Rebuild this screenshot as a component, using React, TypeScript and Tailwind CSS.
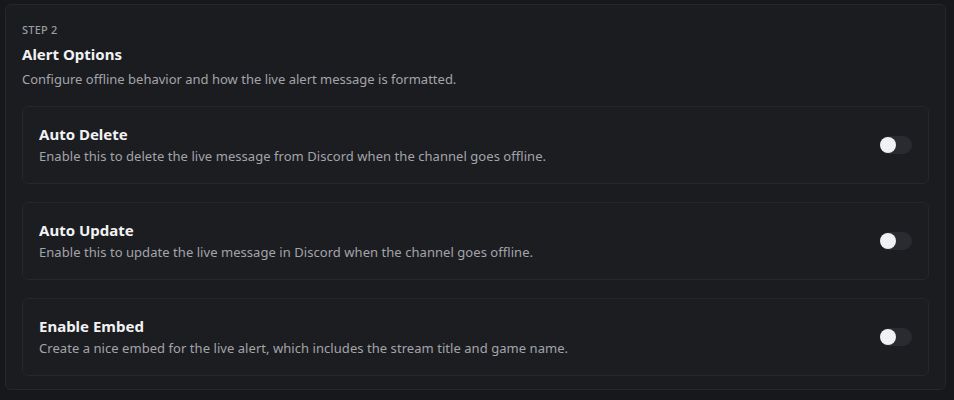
import { useState } from 'react';

type Option = {
  key: string;
  title: string;
  description: string;
};

const options: Option[] = [
  {
    key: 'autoDelete',
    title: 'Auto Delete',
    description: 'Enable this to delete the live message from Discord when the channel goes offline.',
  },
  {
    key: 'autoUpdate',
    title: 'Auto Update',
    description: 'Enable this to update the live message in Discord when the channel goes offline.',
  },
  {
    key: 'enableEmbed',
    title: 'Enable Embed',
    description: 'Create a nice embed for the live alert, which includes the stream title and game name.',
  },
];

function Toggle({ on, onChange }: { on: boolean; onChange: () => void }) {
  return (
    <button
      type="button"
      onClick={onChange}
      className={`relative h-[18px] w-8 shrink-0 rounded-full ${on ? 'bg-[#5865f2]' : 'bg-[#2a2b31]'}`}
    >
      <span
        className={`absolute top-px h-4 w-4 rounded-full bg-[#f1f1f4] ${on ? 'left-[15px]' : 'left-0'}`}
      />
    </button>
  );
}

export default function App() {
  const [state, setState] = useState<Record<string, boolean>>({});

  return (
    <div className="min-h-[400px] bg-[#17181c] pt-[4px] pl-[5px] pr-[8px] font-['Noto_Sans',sans-serif]">
      <div className="rounded-md border border-[#26272c] bg-[#1b1c20] px-4 pt-[17px] pb-[13px]">
        <div className="text-[11px] font-medium uppercase tracking-[0.02em] text-[#9a9ba1]">Step 2</div>
        <h2 className="mt-[4px] text-[15px] font-bold text-[#f2f2f4]">Alert Options</h2>
        <p className="mt-[5px] text-[13px] text-[#a3a4aa]">
          Configure offline behavior and how the live alert message is formatted.
        </p>

        <div className="mt-[16px] flex flex-col gap-[18px]">
          {options.map((opt) => (
            <div
              key={opt.key}
              className="flex h-[78px] items-center justify-between rounded-md border border-[#26272c] bg-[#1c1d21] pl-4 pr-4"
            >
              <div>
                <div className="text-[15px] font-bold text-[#f2f2f4]">{opt.title}</div>
                <div className="mt-[2px] text-[13px] tracking-[0.05px] text-[#a3a4aa]">{opt.description}</div>
              </div>
              <Toggle
                on={!!state[opt.key]}
                onChange={() => setState((s) => ({ ...s, [opt.key]: !s[opt.key] }))}
              />
            </div>
          ))}
        </div>
      </div>
    </div>
  );
}
